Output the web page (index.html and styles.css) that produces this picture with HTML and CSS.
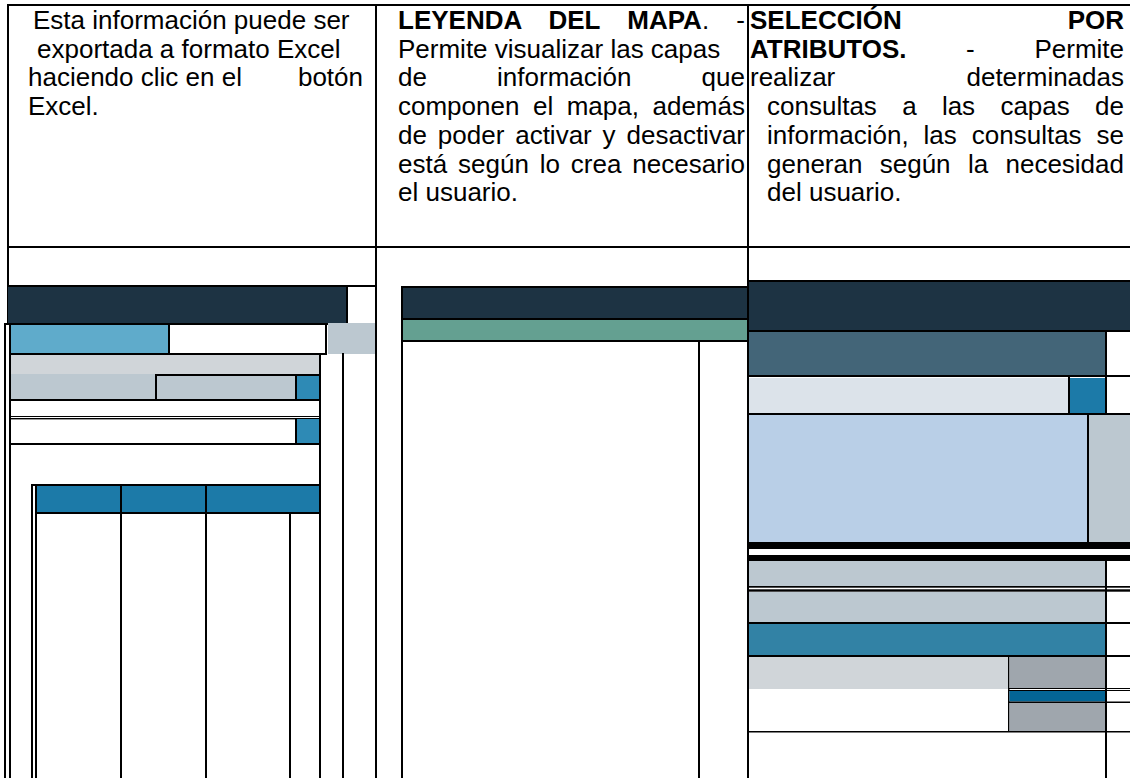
FILE: index.html
```html
<!DOCTYPE html>
<html lang="es">
<head>
<meta charset="utf-8">
<title>Funciones del visor</title>
<link rel="stylesheet" href="styles.css">
</head>
<body>
<div class="doc">
  <div class="cell c1 r1">
    <div class="txt t1">
      <div class="ln l1a">Esta información puede ser</div>
      <div class="ln l1b">exportada a formato Excel</div>
      <div class="ln split"><span>haciendo clic en el</span><span>botón</span></div>
      <div class="ln">Excel.</div>
    </div>
  </div>
  <div class="cell c2 r1">
    <div class="txt t2">
      <div class="ln just"><b>LEYENDA DEL MAPA</b>. -</div>
      <div class="ln">Permite visualizar las capas</div>
      <div class="ln just">de información que</div>
      <div class="ln just">componen el mapa, además</div>
      <div class="ln just">de poder activar y desactivar</div>
      <div class="ln just">está según lo crea necesario</div>
      <div class="ln">el usuario.</div>
    </div>
  </div>
  <div class="cell c3 r1">
    <div class="txt t3">
      <div class="ln just"><b>SELECCIÓN POR</b></div>
      <div class="ln just"><b>ATRIBUTOS.</b> - Permite</div>
      <div class="ln just">realizar determinadas</div>
      <div class="ln just ind">consultas a las capas de</div>
      <div class="ln just ind">información, las consultas se</div>
      <div class="ln just ind">generan según la necesidad</div>
      <div class="ln ind">del usuario.</div>
    </div>
  </div>

  <div class="cell c1 r2">
    <svg class="fig fig1" width="371" height="530" viewBox="4 248 371 530" aria-hidden="true">
      <rect x="8" y="285" width="367" height="2" fill="#000"/>
      <rect x="8" y="287" width="338" height="36" fill="#1d3343"/>
      <rect x="346" y="285" width="2" height="40" fill="#000"/>
      <rect x="4" y="323" width="344" height="2" fill="#000"/>
      <rect x="328" y="323" width="47" height="31" fill="#bcc8d0"/>
      <rect x="6" y="325" width="3" height="453" fill="#fff"/>
      <rect x="4" y="323" width="2" height="455" fill="#000"/>
      <rect x="9" y="323" width="2" height="455" fill="#000"/>
      <rect x="11" y="325" width="157" height="28" fill="#5fabcb"/>
      <rect x="168" y="323" width="2" height="32" fill="#000"/>
      <rect x="325" y="323" width="2" height="32" fill="#000"/>
      <rect x="9" y="353" width="318" height="2" fill="#000"/>
      <rect x="11" y="355" width="308" height="19" fill="#d0d5d9"/>
      <rect x="319" y="353" width="2" height="425" fill="#000"/>
      <rect x="342" y="353" width="2" height="425" fill="#000"/>
      <rect x="11" y="374" width="144" height="25" fill="#bcc8d0"/>
      <rect x="155" y="374" width="166" height="2" fill="#000"/>
      <rect x="155" y="374" width="2" height="26" fill="#000"/>
      <rect x="157" y="376" width="138" height="23" fill="#bcc8d0"/>
      <rect x="295" y="374" width="2" height="26" fill="#000"/>
      <rect x="297" y="376" width="22" height="23" fill="#2e8ab5"/>
      <rect x="11" y="399" width="310" height="2" fill="#000"/>
      <rect x="11" y="416" width="310" height="1" fill="#000"/>
      <rect x="11" y="418" width="310" height="1.4" fill="#000"/>
      <rect x="295" y="419" width="2" height="24" fill="#000"/>
      <rect x="297" y="419" width="22" height="24" fill="#2e8ab5"/>
      <rect x="11" y="443" width="310" height="2" fill="#000"/>
      <rect x="31" y="484" width="290" height="2" fill="#000"/>
      <rect x="31" y="484" width="2" height="294" fill="#000"/>
      <rect x="35" y="486" width="2" height="292" fill="#000"/>
      <rect x="37" y="486" width="282" height="26" fill="#1c7aa8"/>
      <rect x="37" y="512" width="282" height="2" fill="#000"/>
      <rect x="120" y="484" width="2" height="294" fill="#000"/>
      <rect x="205" y="484" width="2" height="294" fill="#000"/>
      <rect x="289" y="514" width="2" height="264" fill="#000"/>
    </svg>
  </div>
  <div class="cell c2 r2">
    <svg class="fig fig2" width="370" height="530" viewBox="377 248 370 530" aria-hidden="true">
      <rect x="401" y="286" width="346" height="2" fill="#000"/>
      <rect x="403" y="288" width="344" height="30" fill="#1d3343"/>
      <rect x="401" y="318" width="346" height="2" fill="#000"/>
      <rect x="403" y="320" width="344" height="20" fill="#64a091"/>
      <rect x="401" y="340" width="346" height="2" fill="#000"/>
      <rect x="401" y="286" width="2" height="492" fill="#000"/>
      <rect x="698" y="342" width="2" height="436" fill="#000"/>
    </svg>
  </div>
  <div class="cell c3 r2">
    <svg class="fig fig3" width="381" height="530" viewBox="749 248 381 530" aria-hidden="true">
      <rect x="749" y="280" width="381" height="2" fill="#000"/>
      <rect x="749" y="282" width="381" height="48" fill="#1d3343"/>
      <rect x="749" y="330" width="381" height="2" fill="#000"/>
      <rect x="749" y="332" width="356" height="43" fill="#436578"/>
      <rect x="1105" y="330" width="2" height="84" fill="#000"/>
      <rect x="749" y="375" width="381" height="2" fill="#000"/>
      <rect x="749" y="378" width="319" height="35" fill="#dce3ea"/>
      <rect x="1068" y="377" width="2" height="36" fill="#000"/>
      <rect x="1070" y="378" width="35" height="35" fill="#1c7aa8"/>
      <rect x="749" y="413" width="381" height="2" fill="#000"/>
      <rect x="749" y="415" width="338" height="127" fill="#b9cfe7"/>
      <rect x="1087" y="415" width="2" height="127" fill="#000"/>
      <rect x="1089" y="415" width="41" height="127" fill="#bcc8d0"/>
      <rect x="749" y="542" width="381" height="7" fill="#000"/>
      <rect x="749" y="555" width="381" height="6" fill="#000"/>
      <rect x="749" y="561" width="356" height="25" fill="#bcc8d0"/>
      <rect x="1105" y="561" width="2" height="217" fill="#000"/>
      <rect x="749" y="586" width="381" height="1.7" fill="#000"/>
      <rect x="749" y="589.3" width="381" height="2.4" fill="#000"/>
      <rect x="749" y="592" width="356" height="30" fill="#bcc8d0"/>
      <rect x="749" y="622" width="381" height="2" fill="#000"/>
      <rect x="749" y="624" width="356" height="31" fill="#3282a5"/>
      <rect x="749" y="655" width="381" height="2" fill="#000"/>
      <rect x="749" y="657" width="259" height="32" fill="#d0d5d9"/>
      <rect x="1008" y="657" width="1.5" height="74" fill="#000"/>
      <rect x="1009.5" y="657" width="95.5" height="31" fill="#9fa6ad"/>
      <rect x="1009" y="688" width="121" height="1" fill="#000"/>
      <rect x="1009" y="690" width="121" height="1" fill="#000"/>
      <rect x="1009.5" y="691" width="95.5" height="10.5" fill="#046595"/>
      <rect x="1009" y="701.5" width="121" height="1.5" fill="#000"/>
      <rect x="1009.5" y="703" width="95.5" height="28" fill="#9fa6ad"/>
      <rect x="749" y="731" width="381" height="1.5" fill="#000"/>
    </svg>
  </div>
</div>
</body>
</html>
```

FILE: styles.css
```css
html, body {
  margin: 0;
  padding: 0;
  width: 1130px;
  height: 778px;
  overflow: hidden;
  background: #fff;
}

body {
  color: #000;
  font-family: "Liberation Sans", Arial, sans-serif;
}

.doc {
  display: grid;
  grid-template-columns: 368px 372px 400px;
  grid-template-rows: 242px 540px;
  margin: 4px 0 0 7px;
  border-top: 2px solid #000;
  border-left: 2px solid #000;
}

.cell {
  border-right: 2px solid #000;
  border-bottom: 2px solid #000;
  min-width: 0;
}

.txt {
  font-size: 26px;
  line-height: 28.7px;
}

.ln {
  white-space: nowrap;
}

.just {
  text-align: justify;
  text-align-last: justify;
  white-space: normal;
}

.split {
  display: flex;
  justify-content: space-between;
}

.c1.r1 {
  padding: 0 0 0 19px;
}
.t1 {
  width: 335px;
}
.l1a {
  margin-left: 5px;
}
.l1b {
  margin-left: 9px;
}

.c2.r1 {
  padding: 0 0 0 21px;
}
.t2 {
  width: 347px;
}

.c3.r1 {
  padding: 0 0 0 1px;
}
.t3 {
  width: 374px;
}
.ind {
  margin-left: 17px;
}

.r2 {
  overflow: visible;
}

.fig {
  display: block;
}

.fig1 {
  margin-left: -5px;
}
</style>
```
